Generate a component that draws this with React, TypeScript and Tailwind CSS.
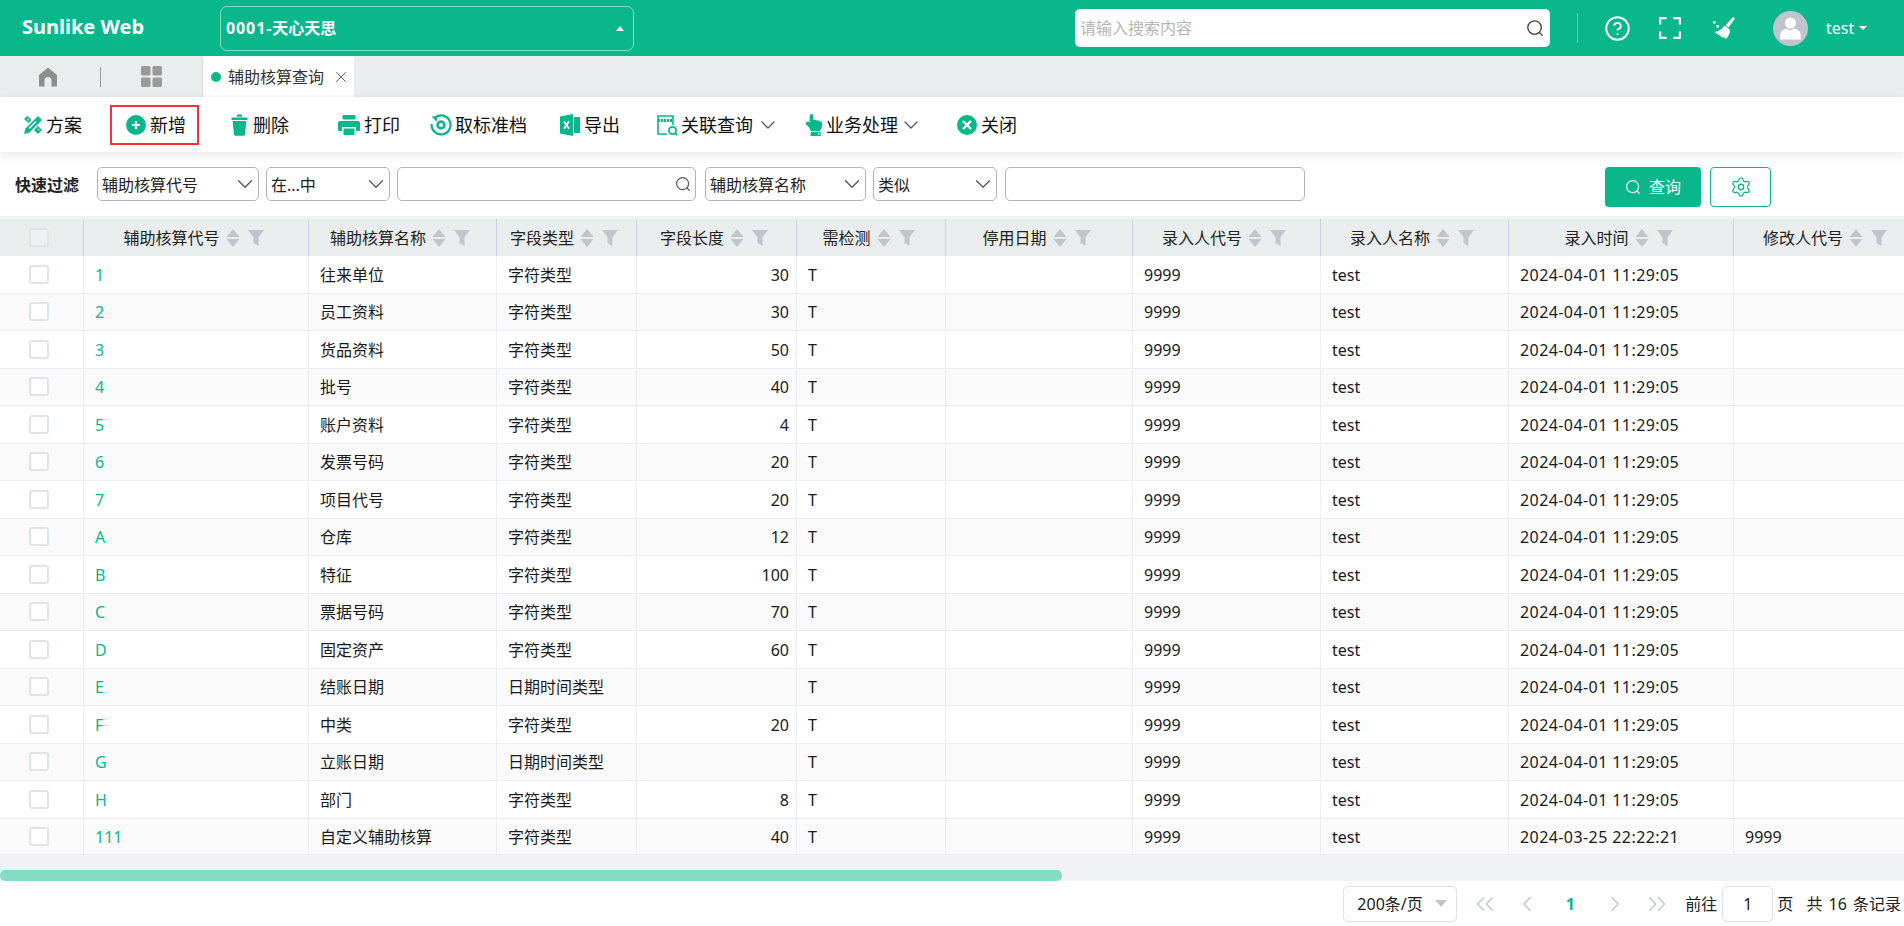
import { ChevronDown, ChevronLeft, ChevronRight, ChevronsLeft, ChevronsRight, CircleHelp, Settings, X } from 'lucide-react'
import { FaHandPointUp } from 'react-icons/fa'
import type { ReactNode } from 'react'

const GREEN = '#09b78b'

const cols = ['辅助核算代号', '辅助核算名称', '字段类型', '字段长度', '需检测', '停用日期', '录入人代号', '录入人名称', '录入时间', '修改人代号']

const gridCols = 'grid grid-cols-[84px_225px_188px_140px_160px_149px_187px_188px_188px_225px_188px]'

const rows = [
  ['1', '往来单位', '字符类型', '30'],
  ['2', '员工资料', '字符类型', '30'],
  ['3', '货品资料', '字符类型', '50'],
  ['4', '批号', '字符类型', '40'],
  ['5', '账户资料', '字符类型', '4'],
  ['6', '发票号码', '字符类型', '20'],
  ['7', '项目代号', '字符类型', '20'],
  ['A', '仓库', '字符类型', '12'],
  ['B', '特征', '字符类型', '100'],
  ['C', '票据号码', '字符类型', '70'],
  ['D', '固定资产', '字符类型', '60'],
  ['E', '结账日期', '日期时间类型', ''],
  ['F', '中类', '字符类型', '20'],
  ['G', '立账日期', '日期时间类型', ''],
  ['H', '部门', '字符类型', '8'],
  ['111', '自定义辅助核算', '字符类型', '40'],
]

function SearchIcon({ size = 18, color = '#444' }: { size?: number; color?: string }) {
  return (
    <svg width={size} height={size} viewBox="0 0 20 20" fill="none" stroke={color} strokeWidth="1.5" strokeLinecap="round">
      <circle cx="9.5" cy="9.5" r="7.5" />
      <path d="M15 15l3 3" />
    </svg>
  )
}

function ToolsIcon() {
  return (
    <svg width="20" height="20" viewBox="0 0 20 20" fill={GREEN}>
      <path d="M15 1l4 4L6.500 17.500 1 19l1.500-5.500z" />
      <path d="M13 6.500l-7 7" stroke="#fff" strokeWidth="1.500" />
      <path d="M4.500 1L8.500 5l-3 3-4.500-4z" />
      <path d="M15 11l4 4-4 4-4-4z" />
      <path d="M4.500 4.200l1 1M15 14l1 1" stroke="#fff" strokeWidth="1.500" />
    </svg>
  )
}

function PlusIcon() {
  return (
    <svg width="20" height="20" viewBox="0 0 20 20">
      <circle cx="10" cy="10" r="10" fill={GREEN} />
      <path d="M10 6v8M6 10h8" stroke="#fff" strokeWidth="2.200" />
    </svg>
  )
}

function TrashIcon() {
  return (
    <svg width="17" height="22" viewBox="0 0 17 22" fill={GREEN}>
      <path d="M6 0.500h5v2.200h-5z" />
      <rect x="0.500" y="3.600" width="16" height="2.400" rx="0.600" />
      <path d="M1.600 7h13.800l-1.400 13.400a1.500 1.500 0 0 1-1.500 1.300H4.500a1.500 1.500 0 0 1-1.500-1.300z" />
    </svg>
  )
}

function PrintIcon() {
  return (
    <svg width="22" height="20" viewBox="0 0 22 20" fill={GREEN}>
      <rect x="4.500" y="0" width="13" height="4.500" rx="1" />
      <path d="M2 6h18a2 2 0 0 1 2 2v7a1 1 0 0 1-1 1h-3v-4H4v4H1a1 1 0 0 1-1-1V8a2 2 0 0 1 2-2z" />
      <path d="M5.500 13.500h11V19a1 1 0 0 1-1 1h-9a1 1 0 0 1-1-1z" />
    </svg>
  )
}

function ReturnIcon() {
  return (
    <svg width="22" height="22" viewBox="0 0 22 22" fill="none" stroke={GREEN}>
      <path d="M5 3.600A9.500 9.500 0 1 1 1.600 10" strokeWidth="2.200" />
      <path d="M1.500 2.500h5.500v5.200z" fill={GREEN} strokeWidth="0" />
      <circle cx="11" cy="11" r="3.400" strokeWidth="2.600" />
    </svg>
  )
}

function ExcelIcon() {
  return (
    <svg width="20" height="22" viewBox="0 0 20 22" fill={GREEN}>
      <path d="M0 2.500L13 0v22L0 19.500z" />
      <rect x="14" y="3" width="6" height="16" />
      <path d="M4 7.200l5 7.600M9 7.200l-5 7.600" stroke="#fff" strokeWidth="1.800" />
    </svg>
  )
}

function RelationIcon() {
  return (
    <svg width="21" height="21" viewBox="0 0 21 21" fill="none" stroke={GREEN} strokeWidth="1.600">
      <path d="M10 19H1V1h15v9" />
      <path d="M1 5.500h15" strokeWidth="3" strokeDasharray="2 1" />
      <circle cx="15.500" cy="15.500" r="3.600" strokeWidth="1.800" />
      <path d="M18 18l2.200 2.200" strokeWidth="1.800" />
    </svg>
  )
}

function CloseCircle() {
  return (
    <svg width="20" height="20" viewBox="0 0 20 20">
      <circle cx="10" cy="10" r="10" fill={GREEN} />
      <path d="M6 6l8 8M14 6l-8 8" stroke="#fff" strokeWidth="2.400" />
    </svg>
  )
}

function BroomIcon() {
  return (
    <svg width="22" height="22" viewBox="0 0 22 22" fill="#fff">
      <path d="M20 0l2 1.500-6.500 9-2.800-2.200z" />
      <path d="M11.500 8.500l5.500 4.200c.2 3-1.300 6.300-4 9.300l-2.500-2.800.3 2.100-3-1.800-1-2.300-.4 1.400L1.500 15l2-.4c3.500-.9 6-3.200 8-6.100z" />
      <path d="M0 4h2.500v2.500H0zM3.500 8H6v2.500H3.500z" />
    </svg>
  )
}

function FullIcon() {
  return (
    <svg width="22" height="22" viewBox="0 0 22 22" fill="none" stroke="#fff" strokeWidth="2.200" strokeLinejoin="round">
      <path d="M1.100 7.500V1.100h6.500M14.400 1.100h6.500v6.400M20.900 14.500v6.400h-6.500M7.600 20.900H1.100v-6.400" />
    </svg>
  )
}

function SortIcon() {
  return (
    <svg width="14" height="18" viewBox="0 0 14 18" fill="#c0c4cc">
      <path d="M7 0l6.500 8H.5z" />
      <path d="M7 18l-6.500-8h13z" />
    </svg>
  )
}

function FilterIcon() {
  return (
    <svg width="16" height="16" viewBox="0 0 16 16" fill="#c0c4cc">
      <path d="M0 0h16l-5.500 7v9l-5-3V7z" />
    </svg>
  )
}

function ToolItem({ icon, label, className, caret }: { icon: ReactNode; label: string; className?: string; caret?: boolean }) {
  return (
    <div className={`flex items-center text-[18px] text-[#111] ${className ?? ''}`}>
      {icon}
      <span>{label}</span>
      {caret && <ChevronDown size={24} strokeWidth={1.3} className="text-[#555]" />}
    </div>
  )
}

function FakeSelect({ label, className }: { label: string; className: string }) {
  return (
    <div className={`flex h-[34px] items-center justify-between rounded-[5px] border border-[#b4b4b4] pl-[4px] text-[16px] text-[#222] ${className}`}>
      <span className="pt-[1px]">{label}</span>
      <ChevronDown size={26} strokeWidth={1.2} className="text-[#555]" />
    </div>
  )
}

function HeaderCell({ title }: { title: string }) {
  return (
    <div className="flex items-center justify-center border-r border-[#cdd3de] pr-[5px] text-[16px] text-[#222]">
      <span>{title}</span>
      <span className="ml-[6px]">
        <SortIcon />
      </span>
      <span className="ml-[8px]">
        <FilterIcon />
      </span>
    </div>
  )
}

function Cell({ children, className }: { children?: ReactNode; className?: string }) {
  return <div className={`flex items-center border-r border-[#ebeef5] px-[11px] pt-[1px] ${className ?? ''}`}>{children}</div>
}

export default function App() {
  return (
    <div className="flex h-[926px] w-[1904px] flex-col overflow-hidden bg-white font-['Noto_Sans','Noto_Sans_CJK_SC',sans-serif]">
      <header className="flex h-[56px] shrink-0 items-center bg-[#09b78b] text-white">
        <div className="ml-[22px] -mt-[2px] w-[198px] text-[20px] font-bold">Sunlike Web</div>
        <div className="flex h-[45px] w-[414px] items-center justify-between rounded-[7px] border border-white/50 pl-[5px] pr-[9px]">
          <span className="text-[16px] font-bold">
            <span className="tracking-[0.9px]">0001-</span>天心天思
          </span>
          <span className="h-0 w-0 border-x-[4.5px] border-b-[5px] border-x-transparent border-b-white" />
        </div>
        <div className="ml-[441px] flex h-[38px] w-[475px] items-center justify-between rounded-[5px] bg-white pl-[5px] pr-[6px]">
          <span className="text-[16px] text-[#b5b5b5]">请输入搜索内容</span>
          <SearchIcon size={18} />
        </div>
        <div className="ml-[27px] h-[30px] w-[1px] bg-white/30" />
        <CircleHelp size={27} strokeWidth={1.7} className="ml-[26px]" />
        <span className="ml-[28px]">
          <FullIcon />
        </span>
        <span className="ml-[32px]">
          <BroomIcon />
        </span>
        <div className="ml-[38px] flex h-[35px] w-[35px] items-center justify-center overflow-hidden rounded-full bg-[#c0c4cc]">
          <svg width="21" height="23" viewBox="0 0 21 23" fill="#fff">
            <circle cx="10.500" cy="6" r="5.600" />
            <path d="M6.500 11.500l4 2 4-2c3 .6 5 2.200 6 5l.5 6H0l.5-6c1-2.800 3-4.400 6-5z" />
          </svg>
        </div>
        <span className="ml-[18px] text-[16px]">test</span>
        <span className="ml-[5px] h-0 w-0 border-x-[4px] border-t-[4px] border-x-transparent border-t-white" />
      </header>

      <div className="flex h-[41px] shrink-0 items-center bg-[#e9eded]">
        <svg width="20" height="20" viewBox="0 0 20 20" fill="#8e8e8e" className="ml-[38px]">
          <path d="M10 .5L19 8v10.500a1 1 0 0 1-1 1h-4.500v-6a3.500 3.500 0 0 0-7 0v6H2a1 1 0 0 1-1-1V8z" />
        </svg>
        <div className="ml-[42px] h-[20px] w-[1px] bg-[#999]" />
        <svg width="21" height="21" viewBox="0 0 21 21" fill="#9a9a9a" className="ml-[40px]">
          <rect x="0" y="0" width="9.500" height="9.500" rx="1.500" />
          <rect x="11.500" y="0" width="9.500" height="9.500" rx="1.500" />
          <rect x="0" y="11.500" width="9.500" height="9.500" rx="1.500" />
          <rect x="11.500" y="11.500" width="9.500" height="9.500" rx="1.500" />
        </svg>
        <div className="ml-[40px] flex h-full w-[152px] items-center rounded-t-[3px] border-l border-[#d5d8d8] bg-white">
          <span className="ml-[8px] h-[10px] w-[10px] rounded-full bg-[#09b78b]" />
          <span className="ml-[7px] text-[16px] text-[#333]">辅助核算查询</span>
          <X size={18} strokeWidth={1.2} className="ml-[8px] text-[#555]" />
        </div>
      </div>

      <div className="relative z-10 flex h-[55px] shrink-0 items-center bg-white pt-[1px] shadow-[0_3px_10px_rgba(0,0,0,0.1)]">
        <ToolItem icon={<ToolsIcon />} label="方案" className="ml-[23px] gap-[3px]" />
        <ToolItem icon={<PlusIcon />} label="新增" className="ml-[28px] h-[40px] w-[89px] gap-[4px] border-2 border-[#f33333] pl-[14px]" />
        <ToolItem icon={<TrashIcon />} label="删除" className="ml-[32px] gap-[5px]" />
        <ToolItem icon={<PrintIcon />} label="打印" className="ml-[49px] gap-[4px]" />
        <ToolItem icon={<ReturnIcon />} label="取标准档" className="ml-[30px] gap-[3px]" />
        <ToolItem icon={<ExcelIcon />} label="导出" className="ml-[33px] gap-[4px]" />
        <ToolItem icon={<RelationIcon />} label="关联查询" caret className="ml-[37px] gap-[3px]" />
        <ToolItem icon={<FaHandPointUp size={22} color={GREEN} />} label="业务处理" caret className="ml-[23px] gap-[1px]" />
        <ToolItem icon={<CloseCircle />} label="关闭" className="ml-[34px] gap-[4px]" />
      </div>

      <div className="flex h-[64px] shrink-0 items-start bg-white pt-[15px]">
        <span className="ml-[15px] flex h-[34px] w-[82px] items-center pt-[1px] text-[16px] font-bold text-[#222]">快速过滤</span>
        <FakeSelect label="辅助核算代号" className="w-[162px]" />
        <FakeSelect label="在...中" className="ml-[7px] w-[124px]" />
        <div className="ml-[7px] flex h-[34px] w-[299px] items-center justify-end rounded-[5px] border border-[#b4b4b4] pr-[4px]">
          <SearchIcon size={16} color="#555" />
        </div>
        <FakeSelect label="辅助核算名称" className="ml-[9px] w-[161px]" />
        <FakeSelect label="类似" className="ml-[7px] w-[124px]" />
        <div className="ml-[8px] h-[34px] w-[300px] rounded-[5px] border border-[#b4b4b4]" />
        <div className="ml-[300px] flex h-[40px] w-[96px] items-center justify-center gap-[8px] rounded-[4px] bg-[#09b78b] text-[16px] text-white">
          <SearchIcon size={16} color="#fff" />
          <span>查询</span>
        </div>
        <div className="ml-[9px] flex h-[40px] w-[61px] items-center justify-center rounded-[4px] border border-[#09b78b]">
          <Settings size={22} strokeWidth={1.4} color={GREEN} />
        </div>
      </div>

      <div className="h-[3px] shrink-0 bg-[#f0f1f1]" />

      <div className={`${gridCols} h-[37px] shrink-0 bg-[#e9eded]`}>
        <div className="flex items-center justify-center border-r border-[#cdd3de]">
          <span className="mr-[5px] h-[19px] w-[20px] rounded-[3px] border-2 border-[#dfe3ea] bg-[#eef0f2]" />
        </div>
        {cols.map((c) => (
          <HeaderCell key={c} title={c} />
        ))}
      </div>

      <div className="h-[599px] shrink-0 overflow-hidden border-b border-[#ebeef5]">
        {rows.map((r, i) => (
          <div key={r[0]} className={`${gridCols} h-[37.5px] border-b border-[#ebeef5] text-[16px] text-[#1a1a1a] ${i % 2 === 1 ? 'bg-[#fafafa]' : 'bg-white'}`}>
            <div className="flex items-center justify-center border-r border-[#ebeef5]">
              <span className="mr-[5px] h-[19px] w-[20px] rounded-[3px] border-2 border-[#dfe3ea] bg-white" />
            </div>
            <Cell className="text-[#09b78b]">{r[0]}</Cell>
            <Cell>{r[1]}</Cell>
            <Cell>{r[2]}</Cell>
            <Cell className="justify-end pr-[7px]">{r[3]}</Cell>
            <Cell>T</Cell>
            <Cell />
            <Cell>9999</Cell>
            <Cell>test</Cell>
            <Cell className="tracking-[0.42px]">{i === 15 ? '2024-03-25 22:22:21' : '2024-04-01 11:29:05'}</Cell>
            <Cell>{i === 15 ? '9999' : ''}</Cell>
          </div>
        ))}
      </div>

      <div className="flex h-[26px] shrink-0 flex-col justify-end bg-[#f0f2f5]">
        <div className="h-[11px] w-[1062px] rounded-[5px] bg-[#84dcc5]" />
      </div>

      <div className="flex h-[45px] shrink-0 items-center justify-end pr-[3px] text-[16px] text-[#222]">
        <div className="flex h-[36px] w-[114px] items-center justify-between rounded-[5px] border border-[#dcdfe6] pl-[13px] pr-[9px]">
          <span>200条/页</span>
          <span className="h-0 w-0 border-x-[6px] border-t-[7px] border-x-transparent border-t-[#c0c4cc]" />
        </div>
        <ChevronsLeft size={30} strokeWidth={1.1} className="ml-[13px] text-[#c0c4cc]" />
        <ChevronLeft size={26} strokeWidth={1.3} className="ml-[14px] text-[#c0c4cc]" />
        <span className="ml-[25px] w-[10px] text-center font-bold text-[#09b78b]">1</span>
        <ChevronRight size={26} strokeWidth={1.3} className="ml-[27px] text-[#c0c4cc]" />
        <ChevronsRight size={30} strokeWidth={1.1} className="ml-[14px] text-[#c0c4cc]" />
        <span className="ml-[13px]">前往</span>
        <div className="ml-[5px] flex h-[36px] w-[51px] items-center justify-center rounded-[5px] border border-[#dcdfe6]">1</div>
        <span className="ml-[4px]">页</span>
        <span className="ml-[13px] [word-spacing:2px]">共 16 条记录</span>
      </div>
    </div>
  )
}
